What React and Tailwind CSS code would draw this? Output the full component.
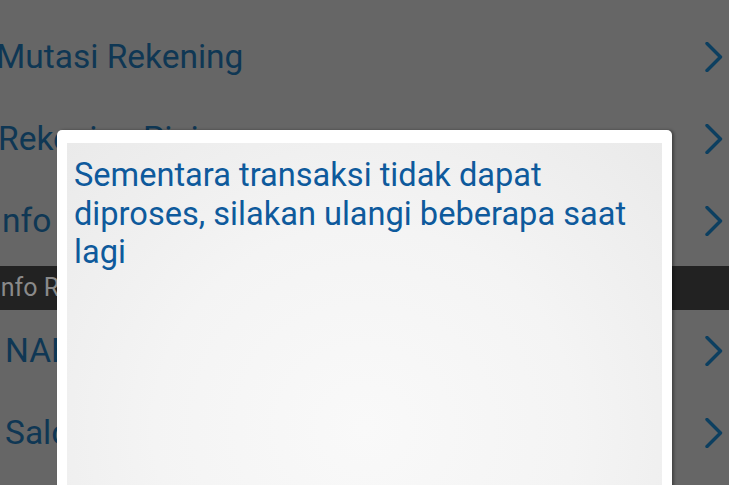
import React from 'react';

const topRows = [
  { label: 'Mutasi Rekening', shift: '-ml-[4px]' },
  { label: 'Rekening Pinjaman', shift: '-ml-[2px]' },
  { label: 'Info Saldo', shift: '-ml-[7px]' },
];
const bottomRows = [
  { label: 'NAB Reksadana', shift: 'pl-[5px]' },
  { label: 'Saldo Reksadana', shift: 'pl-[5px]' },
];

function Chevron() {
  return (
    <svg width="18" height="30" viewBox="0 0 18 30" className="shrink-0">
      <polyline
        points="2,1.5 15.5,15 2,28.5"
        fill="none"
        stroke="#0c3f60"
        strokeWidth="3.4"
        strokeLinecap="round"
        strokeLinejoin="round"
      />
    </svg>
  );
}

function Row({ label, shift }) {
  return (
    <div className="flex h-[82px] items-center justify-between pr-[6px]">
      <span className={`whitespace-nowrap text-[33.5px] text-[#0f3754] ${shift}`}>{label}</span>
      <Chevron />
    </div>
  );
}

export default function App() {
  return (
    <div
      className="relative h-[485px] w-[729px] overflow-hidden bg-[#666666]"
      style={{ fontFamily: 'Roboto, "Noto Sans", sans-serif' }}
    >
      {/* Dimmed menu list */}
      <div className="pt-[16px]">
        {topRows.map((r) => (
          <Row key={r.label} {...r} />
        ))}
        <div className="mt-[4px] flex h-[44px] items-center bg-[#222222]">
          <span className="-ml-[6px] whitespace-nowrap text-[25px] text-[#8a8a8a]">Info Reksadana</span>
        </div>
        {bottomRows.map((r) => (
          <Row key={r.label} {...r} />
        ))}
      </div>

      {/* Dialog */}
      <div className="absolute left-[57px] top-[130px] h-[420px] w-[615px] rounded-[5px] bg-white px-[10px] pt-[13px] shadow-[2px_0_3px_rgba(0,0,0,0.35)]">
        <div className="h-full bg-[radial-gradient(ellipse_at_50%_70%,#f9f9f9_0%,#f4f4f4_50%,#eaeaea_100%)] px-[7px] pt-[13px]">
          <p className="text-[32.6px] leading-[38.6px] text-[#0e5a9c]">
            Sementara transaksi tidak dapat diproses, silakan ulangi beberapa saat lagi
          </p>
        </div>
      </div>
    </div>
  );
}
